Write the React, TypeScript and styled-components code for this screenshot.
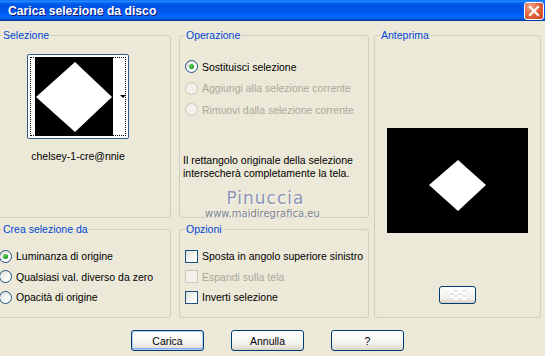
import { FC, ReactNode } from 'react';
import styled, { createGlobalStyle } from 'styled-components';

const GlobalStyle = createGlobalStyle`
    html, body {
        margin: 0;
        padding: 0;
        background: #ECE9D8;
    }
    body {
        font-family: "Liberation Sans", Arial, sans-serif;
        font-size: 10.5px;
        color: #000;
    }
`;

type OptionProps = {
    label: string;
    checked?: boolean;
    disabled?: boolean;
};

const RadioOption: FC<OptionProps> = ({ label, checked, disabled }) => (
    <OptionRow $disabled={disabled}>
        <RadioCircle $disabled={disabled}>{checked && <RadioDot />}</RadioCircle>
        {label}
    </OptionRow>
);

const CheckOption: FC<OptionProps> = ({ label, disabled }) => (
    <OptionRow $disabled={disabled}>
        <CheckBox $disabled={disabled} />
        {label}
    </OptionRow>
);

const Group: FC<{ title: string; area: string; children?: ReactNode }> = ({ title, area, children }) => (
    <GroupBox style={{ gridArea: area }}>
        <GroupTitle>{title}</GroupTitle>
        {children}
    </GroupBox>
);

export default function App() {
    return (
        <>
            <GlobalStyle />
            <Window>
                <TitleBar>
                    <TitleText>Carica selezione da disco</TitleText>
                    <CloseButton>
                        <svg width="12" height="12" viewBox="0 0 12 12">
                            <path d="M2 2 L10 10 M10 2 L2 10" stroke="#fff" strokeWidth="2.2" strokeLinecap="square" />
                        </svg>
                    </CloseButton>
                </TitleBar>
                <Content>
                    <Group title="Selezione" area="sel">
                        <ThumbColumn>
                            <Thumb>
                                <svg width="78" height="79" viewBox="0 0 78 79">
                                    <rect width="78" height="79" fill="#000" />
                                    <polygon points="1,40 40,5 77,40 40,75" fill="#fff" />
                                </svg>
                                <DropArrow />
                            </Thumb>
                            <ThumbLabel>chelsey-1-cre@nnie</ThumbLabel>
                        </ThumbColumn>
                    </Group>

                    <Group title="Operazione" area="op">
                        <OptionList $left={5} $top={14} $row={21.5}>
                            <RadioOption label="Sostituisci selezione" checked />
                            <RadioOption label="Aggiungi alla selezione corrente" disabled />
                            <RadioOption label="Rimuovi dalla selezione corrente" disabled />
                        </OptionList>
                        <Note>
                            Il rettangolo originale della selezione
                            <br />
                            intersecherà completamente la tela.
                        </Note>
                        <Watermark>
                            <WatermarkName>Pinuccia</WatermarkName>
                            <WatermarkSite>www.maidiregrafica.eu</WatermarkSite>
                        </Watermark>
                    </Group>

                    <Group title="Anteprima" area="prev">
                        <PreviewColumn>
                            <svg width="141" height="105" viewBox="0 0 141 105">
                                <rect width="141" height="105" fill="#000" />
                                <polygon points="42,57 71,32 99,57 71,83" fill="#fff" />
                            </svg>
                            <SmallButton>
                                <Checker />
                            </SmallButton>
                        </PreviewColumn>
                    </Group>

                    <Group title="Crea selezione da" area="crea">
                        <OptionList $left={2} $top={10} $row={20.5}>
                            <RadioOption label="Luminanza di origine" checked />
                            <RadioOption label="Qualsiasi val. diverso da zero" />
                            <RadioOption label="Opacità di origine" />
                        </OptionList>
                    </Group>

                    <Group title="Opzioni" area="opz">
                        <OptionList $left={5} $top={10} $row={20.5}>
                            <CheckOption label="Sposta in angolo superiore sinistro" />
                            <CheckOption label="Espandi sulla tela" disabled />
                            <CheckOption label="Inverti selezione" />
                        </OptionList>
                    </Group>
                </Content>
                <ButtonBar>
                    <DialogButton $default>Carica</DialogButton>
                    <DialogButton>Annulla</DialogButton>
                    <DialogButton>?</DialogButton>
                </ButtonBar>
            </Window>
        </>
    );
}

const Window = styled.div`
    width: 545px;
    height: 356px;
    overflow: hidden;
    background: #ECE9D8;
`;

const TitleBar = styled.div`
    height: 21px;
    display: flex;
    align-items: center;
    padding-left: 8px;
    background: linear-gradient(to bottom,
        #0058EE 0%, #3593FF 5%, #1A83FF 9%, #036FFC 12%, #0262EE 16%,
        #0057E5 22%, #0054E3 28%, #0055EB 56%, #005BF5 66%, #026AFE 78%,
        #0062EF 86%, #0052D6 92%, #0040AB 96%, #003092 100%);
`;

const TitleText = styled.span`
    color: #fff;
    font-weight: bold;
    font-size: 12.2px;
    text-shadow: 1px 1px 0 #0A1883;
    padding-top: 1px;
`;

const CloseButton = styled.div`
    margin-left: auto;
    margin-right: 1px;
    width: 20px;
    height: 18px;
    box-sizing: border-box;
    border: 1px solid #fff;
    border-radius: 3px;
    display: flex;
    align-items: center;
    justify-content: center;
    background: radial-gradient(circle at 30% 25%, #F0A58A 0%, #E2673F 45%, #C9421A 100%);
`;

const Content = styled.div`
    display: grid;
    grid-template-columns: 175px 8px 190px 5px 167px;
    grid-template-rows: 189px 95px;
    grid-template-areas:
        "sel . op . prev"
        "crea . opz . prev";
    row-gap: 5px;
    margin-left: -4px;
    padding-top: 8px;
`;

const GroupBox = styled.fieldset`
    position: relative;
    margin: 0;
    padding: 0;
    min-width: 0;
    border: 1px solid #D0D0BF;
    border-radius: 3px;
    box-sizing: border-box;
`;

const GroupTitle = styled.legend`
    margin-left: 5px;
    padding: 0 1px;
    height: 13px;
    line-height: 13px;
    color: #0046D5;
    font-size: 10.5px;
`;

const ThumbColumn = styled.div`
    display: flex;
    flex-direction: column;
    align-items: center;
    width: 102px;
    margin: 12px 0 0 30px;
`;

const Thumb = styled.div`
    display: flex;
    align-items: center;
    width: 102px;
    height: 85px;
    box-sizing: border-box;
    padding: 2px 0 2px 7px;
    background: #fff;
    border: 1px solid #2F5B8C;
    border-radius: 2px;
    outline: 1px dotted #000;
    outline-offset: -4px;

    svg {
        display: block;
    }
`;

const DropArrow = styled.span`
    margin-left: 7px;
    width: 0;
    height: 0;
    border-left: 3px solid transparent;
    border-right: 3px solid transparent;
    border-top: 3px solid #000;
`;

const ThumbLabel = styled.div`
    margin-top: 11px;
    white-space: nowrap;
`;

const OptionList = styled.div<{ $left: number; $top: number; $row: number }>`
    display: flex;
    flex-direction: column;
    padding: ${p => p.$top}px 0 0 ${p => p.$left}px;

    & > * {
        height: ${p => p.$row}px;
    }
`;

const OptionRow = styled.div<{ $disabled?: boolean }>`
    display: flex;
    align-items: center;
    gap: 4px;
    white-space: nowrap;
    color: ${p => (p.$disabled ? '#ACA899' : '#000')};
`;

const RadioCircle = styled.span<{ $disabled?: boolean }>`
    width: 13px;
    height: 13px;
    box-sizing: border-box;
    flex: none;
    border-radius: 50%;
    border: 1px solid ${p => (p.$disabled ? '#CAC8BB' : '#1C5180')};
    background: ${p => (p.$disabled ? '#F2F1EA' : 'linear-gradient(135deg, #DCDCD7 0%, #FFFFFF 70%)')};
    display: flex;
    align-items: center;
    justify-content: center;
`;

const RadioDot = styled.span`
    width: 5px;
    height: 5px;
    border-radius: 50%;
    background: radial-gradient(circle at 35% 35%, #5FD35F 0%, #21A121 60%, #1A7F1A 100%);
`;

const CheckBox = styled.span<{ $disabled?: boolean }>`
    width: 13px;
    height: 13px;
    box-sizing: border-box;
    flex: none;
    border: 1px solid ${p => (p.$disabled ? '#CAC8BB' : '#1C5180')};
    background: ${p => (p.$disabled ? '#F2F1EA' : 'linear-gradient(135deg, #DCDCD7 0%, #FFFFFF 75%)')};
`;

const Note = styled.p`
    margin: 33px 0 0 3px;
    line-height: 13px;
    white-space: nowrap;
`;

const Watermark = styled.div`
    position: absolute;
    left: 25px;
    top: 146px;
    display: flex;
    flex-direction: column;
    align-items: center;
    pointer-events: none;
`;

const WatermarkName = styled.span`
    font-family: "DejaVu Sans", sans-serif;
    font-size: 17px;
    letter-spacing: 1px;
    line-height: 20px;
    padding-left: 6px;
    color: #8E94B4;
    text-shadow: 1px 1px 0 #F8F8F4;
`;

const WatermarkSite = styled.span`
    font-family: "DejaVu Sans", sans-serif;
    font-size: 10px;
    line-height: 12px;
    color: #7D7F8C;
    text-shadow: 1px 1px 0 #F8F8F4;
`;

const PreviewColumn = styled.div`
    display: flex;
    flex-direction: column;
    align-items: center;
    padding-top: 86px;

    svg {
        display: block;
    }
`;

const SmallButton = styled.div`
    margin-top: 53px;
    width: 37px;
    height: 18px;
    box-sizing: border-box;
    border: 1px solid #003C74;
    border-radius: 3px;
    background: linear-gradient(to bottom, #FFFFFF 0%, #F0F0EA 70%, #D6D0C5 100%);
    display: flex;
    align-items: center;
    justify-content: center;
`;

const Checker = styled.span`
    width: 16px;
    height: 10px;
    background: repeating-conic-gradient(#E6E6E6 0% 25%, #FFFFFF 0% 50%) 0 0 / 8px 5px;
`;

const ButtonBar = styled.div`
    display: flex;
    gap: 27px;
    padding: 12px 0 0 131px;
`;

const DialogButton = styled.div<{ $default?: boolean }>`
    width: 73px;
    height: 21px;
    box-sizing: border-box;
    border: 1px solid #003C74;
    border-radius: 3px;
    display: flex;
    align-items: center;
    justify-content: center;
    font-size: 10.5px;
    background: linear-gradient(to bottom, #FFFFFF 0%, #F4F4F0 60%, #E3E0D7 90%, #D6D0C5 100%);
    box-shadow: ${p => (p.$default ? 'inset 0 0 0 1px #B6CDF4, inset 0 -1px 0 1px #8CAAE6' : 'none')};
`;
